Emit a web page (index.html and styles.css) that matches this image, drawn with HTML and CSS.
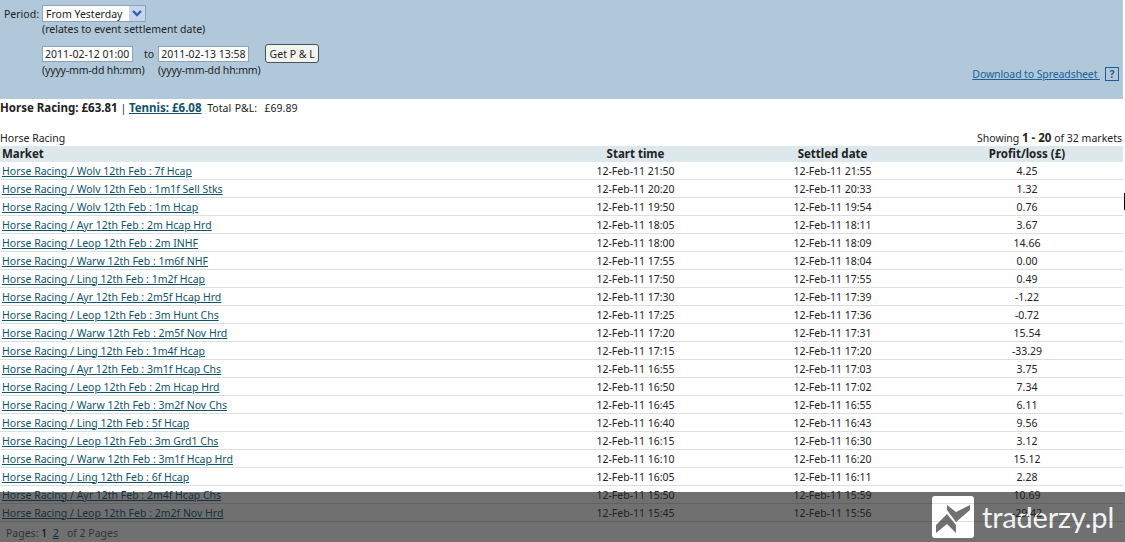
FILE: index.html
```html
<!DOCTYPE html>
<html lang="en">
<head>
    <meta charset="UTF-8">
    <title>Profit and Loss</title>
    <link rel="stylesheet" href="styles.css">
</head>
<body>
    <div class="filter">
        <div class="filter-left">
            <div class="period-row">
                <label class="period-label">Period:</label>
                <div class="select-box">
                    <span>From Yesterday</span>
                    <span class="select-arrow">
                        <svg width="16" height="15" viewBox="0 0 16 15"><path d="M4 5l4 4 4-4" fill="none" stroke="#3b5ea8" stroke-width="2.4"/></svg>
                    </span>
                </div>
            </div>
            <div class="note">(relates to event settlement date)</div>
            <div class="date-row">
                <div class="date-input">2011-02-12 01:00</div>
                <span class="to">to</span>
                <div class="date-input">2011-02-13 13:58</div>
                <button class="get-btn">Get P &amp; L</button>
            </div>
            <div class="format-row">
                <span class="format-hint">(yyyy-mm-dd hh:mm)</span>
                <span class="format-hint">(yyyy-mm-dd hh:mm)</span>
            </div>
        </div>
        <div class="download">
            <a href="#">Download to Spreadsheet&nbsp;</a>
            <span class="help">?</span>
        </div>
    </div>

    <div class="summary">
        <strong>Horse Racing: £63.81</strong> | <a href="#"><strong>Tennis: £6.08</strong></a>
        <span class="total">Total P&amp;L:&nbsp; £69.89</span>
    </div>

    <div class="table-head">
        <span>Horse Racing</span>
        <span>Showing <strong>1 - 20</strong> of 32 markets</span>
    </div>

    <table class="markets">
        <thead>
            <tr><th class="col-market">Market</th><th>Start time</th><th>Settled date</th><th>Profit/loss (£)</th></tr>
        </thead>
        <tbody>
            <tr><td><a href="#">Horse Racing / Wolv 12th Feb : 7f Hcap</a></td><td>12-Feb-11 21:50</td><td>12-Feb-11 21:55</td><td>4.25</td></tr>
            <tr><td><a href="#">Horse Racing / Wolv 12th Feb : 1m1f Sell Stks</a></td><td>12-Feb-11 20:20</td><td>12-Feb-11 20:33</td><td>1.32</td></tr>
            <tr><td><a href="#">Horse Racing / Wolv 12th Feb : 1m Hcap</a></td><td>12-Feb-11 19:50</td><td>12-Feb-11 19:54</td><td>0.76</td></tr>
            <tr><td><a href="#">Horse Racing / Ayr 12th Feb : 2m Hcap Hrd</a></td><td>12-Feb-11 18:05</td><td>12-Feb-11 18:11</td><td>3.67</td></tr>
            <tr><td><a href="#">Horse Racing / Leop 12th Feb : 2m INHF</a></td><td>12-Feb-11 18:00</td><td>12-Feb-11 18:09</td><td>14.66</td></tr>
            <tr><td><a href="#">Horse Racing / Warw 12th Feb : 1m6f NHF</a></td><td>12-Feb-11 17:55</td><td>12-Feb-11 18:04</td><td>0.00</td></tr>
            <tr><td><a href="#">Horse Racing / Ling 12th Feb : 1m2f Hcap</a></td><td>12-Feb-11 17:50</td><td>12-Feb-11 17:55</td><td>0.49</td></tr>
            <tr><td><a href="#">Horse Racing / Ayr 12th Feb : 2m5f Hcap Hrd</a></td><td>12-Feb-11 17:30</td><td>12-Feb-11 17:39</td><td>-1.22</td></tr>
            <tr><td><a href="#">Horse Racing / Leop 12th Feb : 3m Hunt Chs</a></td><td>12-Feb-11 17:25</td><td>12-Feb-11 17:36</td><td>-0.72</td></tr>
            <tr><td><a href="#">Horse Racing / Warw 12th Feb : 2m5f Nov Hrd</a></td><td>12-Feb-11 17:20</td><td>12-Feb-11 17:31</td><td>15.54</td></tr>
            <tr><td><a href="#">Horse Racing / Ling 12th Feb : 1m4f Hcap</a></td><td>12-Feb-11 17:15</td><td>12-Feb-11 17:20</td><td>-33.29</td></tr>
            <tr><td><a href="#">Horse Racing / Ayr 12th Feb : 3m1f Hcap Chs</a></td><td>12-Feb-11 16:55</td><td>12-Feb-11 17:03</td><td>3.75</td></tr>
            <tr><td><a href="#">Horse Racing / Leop 12th Feb : 2m Hcap Hrd</a></td><td>12-Feb-11 16:50</td><td>12-Feb-11 17:02</td><td>7.34</td></tr>
            <tr><td><a href="#">Horse Racing / Warw 12th Feb : 3m2f Nov Chs</a></td><td>12-Feb-11 16:45</td><td>12-Feb-11 16:55</td><td>6.11</td></tr>
            <tr><td><a href="#">Horse Racing / Ling 12th Feb : 5f Hcap</a></td><td>12-Feb-11 16:40</td><td>12-Feb-11 16:43</td><td>9.56</td></tr>
            <tr><td><a href="#">Horse Racing / Leop 12th Feb : 3m Grd1 Chs</a></td><td>12-Feb-11 16:15</td><td>12-Feb-11 16:30</td><td>3.12</td></tr>
            <tr><td><a href="#">Horse Racing / Warw 12th Feb : 3m1f Hcap Hrd</a></td><td>12-Feb-11 16:10</td><td>12-Feb-11 16:20</td><td>15.12</td></tr>
            <tr><td><a href="#">Horse Racing / Ling 12th Feb : 6f Hcap</a></td><td>12-Feb-11 16:05</td><td>12-Feb-11 16:11</td><td>2.28</td></tr>
            <tr class="under-bar"><td><a href="#">Horse Racing / Ayr 12th Feb : 2m4f Hcap Chs</a></td><td>12-Feb-11 15:50</td><td>12-Feb-11 15:59</td><td>10.69</td></tr>
            <tr class="under-bar"><td><a href="#">Horse Racing / Leop 12th Feb : 2m2f Nov Hrd</a></td><td>12-Feb-11 15:45</td><td>12-Feb-11 15:56</td><td>-29.42</td></tr>
        </tbody>
    </table>

    <div class="pages">Pages: <span class="current">1</span> &nbsp;<a href="#">2</a> &nbsp; of 2 Pages</div>

    <div class="cursor-mark"></div>

    <div class="watermark">
        <svg class="logo-mark" width="42" height="42" viewBox="0 0 42 42">
            <rect width="42" height="42" rx="3" fill="#fff"/>
            <path d="M15 9l9 7 14-7v5L24 26l-9-12z" fill="#707070"/>
            <path d="M4 29l11-11 9 11v8l-9-9-11 9z" fill="#707070"/>
        </svg>
        <span class="logo-text">traderzy.pl</span>
    </div>
</body>
</html>
```

FILE: styles.css
```css
html, body {
    height: 542px;
    overflow: hidden;
}

body {
    margin: 0;
    position: relative;
    background: #fff;
    color: #222;
    font-family: 'Noto Sans', Arial, sans-serif;
    font-size: 10.5px;
    line-height: 14px;
}

a {
    color: #0f5468;
}

strong {
    font-size: 11.5px;
}

.filter {
    display: flex;
    justify-content: space-between;
    width: 1123px;
    height: 99px;
    box-sizing: border-box;
    padding: 5px 4px 0 4px;
    background: #b0c8da;
}

.period-row {
    display: flex;
    align-items: center;
}

.period-label {
    width: 38px;
}

.select-box {
    display: flex;
    align-items: center;
    justify-content: space-between;
    width: 99px;
    height: 15px;
    padding-left: 3px;
    background: #fff;
    border: 1px solid #8ba5b8;
}

.select-arrow {
    display: flex;
    width: 16px;
    height: 15px;
    background: #c6d6f0;
}

.note {
    margin-left: 38px;
}

.date-row {
    display: flex;
    align-items: center;
    height: 19px;
    margin-top: 8px;
    margin-left: 38px;
}

.date-input {
    width: 87px;
    height: 14px;
    line-height: 15px;
    padding-left: 2px;
    background: #fff;
    border: 1px solid #8ba5b8;
}

.to {
    margin: 0 4px 0 11px;
}

.get-btn {
    height: 19px;
    width: 54px;
    margin-left: 16px;
    padding: 0;
    color: #222;
    font: inherit;
    background: #f4f4ee;
    border: 1px solid #44525c;
    border-radius: 3px;
}

.format-row {
    display: flex;
    margin-left: 38px;
}

.format-hint {
    width: 116px;
    letter-spacing: -0.15px;
}

.download {
    display: flex;
    align-items: center;
    align-self: flex-start;
    gap: 5px;
    margin-top: 62px;
}

.download a {
    color: #1a5f96;
    letter-spacing: -0.1px;
}

.help {
    width: 12px;
    height: 12px;
    line-height: 12px;
    text-align: center;
    font-weight: bold;
    color: #1a5f96;
    border: 1px solid #1a5f96;
}

.summary {
    height: 18px;
    line-height: 18px;
    white-space: nowrap;
}

.summary .total {
    margin-left: 3px;
    word-spacing: 1px;
}

.table-head {
    display: flex;
    justify-content: space-between;
    width: 1122px;
    margin-top: 14px;
    height: 15px;
}

.markets {
    width: 1123px;
    border-collapse: collapse;
    table-layout: fixed;
}

.markets th {
    height: 16px;
    padding: 0;
    font-size: 11.5px;
    font-weight: bold;
    background: #dce8ec;
}

.markets th.col-market {
    width: 535px;
    text-align: left;
    padding-left: 2px;
}

.markets th:nth-child(2),
.markets th:nth-child(3) {
    width: 197px;
}

.markets td {
    height: 17px;
    padding: 0;
    text-align: center;
    border-bottom: 1px solid rgba(0, 0, 0, 0.13);
}

.markets td:first-child {
    text-align: left;
    padding-left: 2px;
}

.under-bar a {
    color: #123040;
}

.pages {
    margin-top: 4px;
    padding-left: 6px;
    color: #333;
}

.pages .current {
    color: #000;
}

.pages a {
    color: #123040;
}

.cursor-mark {
    position: absolute;
    left: 1124px;
    top: 193px;
    width: 1px;
    height: 17px;
    background: #000;
}

/* sits behind the table so the last rows print over it */
.watermark {
    position: absolute;
    z-index: -1;
    left: 0;
    top: 492px;
    display: flex;
    align-items: center;
    box-sizing: border-box;
    width: 1125px;
    height: 50px;
    padding-left: 932px;
    gap: 8px;
    background: #707070;
}

.logo-mark {
    flex: none;
}

.logo-text {
    color: #f4f4f4;
    font-family: Lato, 'Noto Sans', sans-serif;
    font-size: 29px;
    letter-spacing: -0.2px;
    line-height: 40px;
}
```
